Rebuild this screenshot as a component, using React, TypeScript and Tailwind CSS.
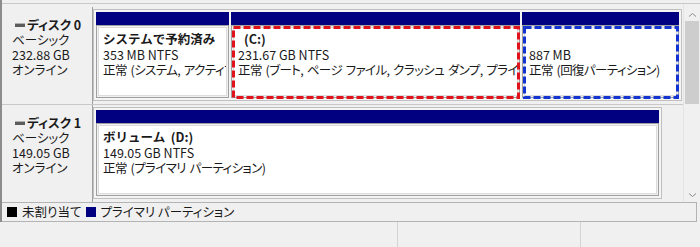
const jp = "font-['Noto_Sans_CJK_JP','Noto_Sans',sans-serif] [font-feature-settings:'palt']";

function DiskLabel({ n, size }: { n: number; size: string }) {
  return (
    <div className="w-[91px] shrink-0 bg-[#f0f0f0] border-r border-[#a0a0a0] pl-[10px] pt-[10px] leading-[15px]">
      <div className="flex items-center h-[15px] font-bold">
        <span className="ml-[3px] mr-[2px] inline-block w-[10px] h-[4px] bg-[#5c5c5c] border-t border-[#b0b0b0]" />
        ディスク {n}
      </div>
      <div>ベーシック</div>
      <div>{size}</div>
      <div>オンライン</div>
    </div>
  );
}

type Part = {
  w: number;
  title: string;
  titleIndent?: boolean;
  size: string;
  status: string;
  dash?: string;
};

function Partition({ p }: { p: Part }) {
  return (
    <div className="shrink-0 flex flex-col" style={{ width: p.w }}>
      <div className="h-[13px] bg-[#000080]" />
      <div className="relative h-[73px] border border-[#a0a0a0] p-px bg-[#f0f0f0]">
        <div className="h-full border border-[#dcdcdc] bg-white pl-[4px] pt-[3px] leading-[15.5px] whitespace-nowrap overflow-hidden">
          <div
            className={
              p.titleIndent
                ? "font-bold pl-[6px] h-[15.5px] whitespace-pre [font-feature-settings:normal]"
                : "font-bold h-[15.5px] whitespace-pre [font-feature-settings:normal]"
            }
          >
            {p.title}
          </div>
          <div>{p.size}</div>
          <div className="tracking-[-0.6px] [word-spacing:1.5px]">{p.status}</div>
        </div>
        {p.dash && (
          <svg className="absolute -left-px -top-px" width={p.w} height={75}>
            <rect
              x={2.5}
              y={2.5}
              width={p.w - 4}
              height={70}
              fill="none"
              stroke={p.dash}
              strokeWidth={3}
              strokeDasharray="7 3"
            />
          </svg>
        )}
      </div>
    </div>
  );
}

function DiskRow({ n, size, frame, parts, last }: { n: number; size: string; frame: number; parts: Part[]; last?: boolean }) {
  return (
    <div className={last ? "flex h-[97px]" : "flex h-[98px] border-b border-[#c8c8c8]"}>
      <DiskLabel n={n} size={size} />
      <div className="pt-[2px]">
        <div className="flex gap-[2px] border border-[#c0c0c0] p-[2px] bg-[#f4f4f4]" style={{ width: frame }}>
          {parts.map((p, i) => (
            <Partition key={i} p={p} />
          ))}
        </div>
      </div>
    </div>
  );
}

function Scrollbar() {
  return (
    <div className="w-[17px] shrink-0 flex flex-col items-center bg-[#f0f0f0] border-l border-[#e4e4e4]">
      <svg width="9" height="6" className="mt-[8px]" viewBox="0 0 9 6">
        <path d="M1 4.5 L4.5 1.5 L8 4.5" fill="none" stroke="#8a8a8a" strokeWidth="1" />
      </svg>
      <div className="mt-[3px] w-[14px] h-[83px] bg-[#cdcdcd]" />
      <div className="flex-1" />
      <svg width="9" height="6" className="mb-[4px]" viewBox="0 0 9 6">
        <path d="M1 1.5 L4.5 4.5 L8 1.5" fill="none" stroke="#8a8a8a" strokeWidth="1" />
      </svg>
    </div>
  );
}

export default function App() {
  const disk0: Part[] = [
    { w: 133, title: "システムで予約済み", size: "353 MB NTFS", status: "正常 (システム, アクティブ, プライマリ パーティション)" },
    { w: 289, title: "(C:)", titleIndent: true, size: "231.67 GB NTFS", status: "正常 (ブート, ページ ファイル, クラッシュ ダンプ, プライマリ パーティション)", dash: "#e0121c" },
    { w: 157, title: "", size: "887 MB", status: "正常 (回復パーティション)", dash: "#1434d2" },
  ];
  const disk1: Part[] = [
    { w: 563, title: "ボリューム  (D:)", size: "149.05 GB NTFS", status: "正常 (プライマリ パーティション)" },
  ];

  return (
    <div className={`w-[700px] h-[247px] bg-[#f0f0f0] flex flex-col text-[12.5px] text-[#1a1a1a] overflow-hidden ${jp}`}>
      <div className="h-[222px] shrink-0 flex flex-col border-l-2 border-[#8c8c8c]">
        <div className="h-[4px] shrink-0 border-b border-[#c8c8c8]" />
        <div className="flex flex-1 min-h-0">
          <div className="flex-1 flex flex-col pt-[3px]">
            <DiskRow n={0} size="232.88 GB" frame={589} parts={disk0} />
            <DiskRow n={1} size="149.05 GB" frame={569} parts={disk1} last />
          </div>
          <Scrollbar />
        </div>
        <div className="h-[20px] shrink-0 flex items-center border-t border-b border-r border-[#b4b4b4] pl-[5px] mr-[3px]">
          <span className="w-[10px] h-[10px] bg-black" />
          <span className="ml-[5px]">未割り当て</span>
          <span className="ml-[5px] w-[10px] h-[10px] bg-[#000080]" />
          <span className="ml-[4px]">プライマリ パーティション</span>
        </div>
      </div>
      <div className="flex-1 flex">
        <div className="w-[398px] border-r border-[#d4d4d4]" />
        <div className="w-[183px] border-r border-[#d4d4d4]" />
        <div className="flex-1" />
      </div>
    </div>
  );
}
